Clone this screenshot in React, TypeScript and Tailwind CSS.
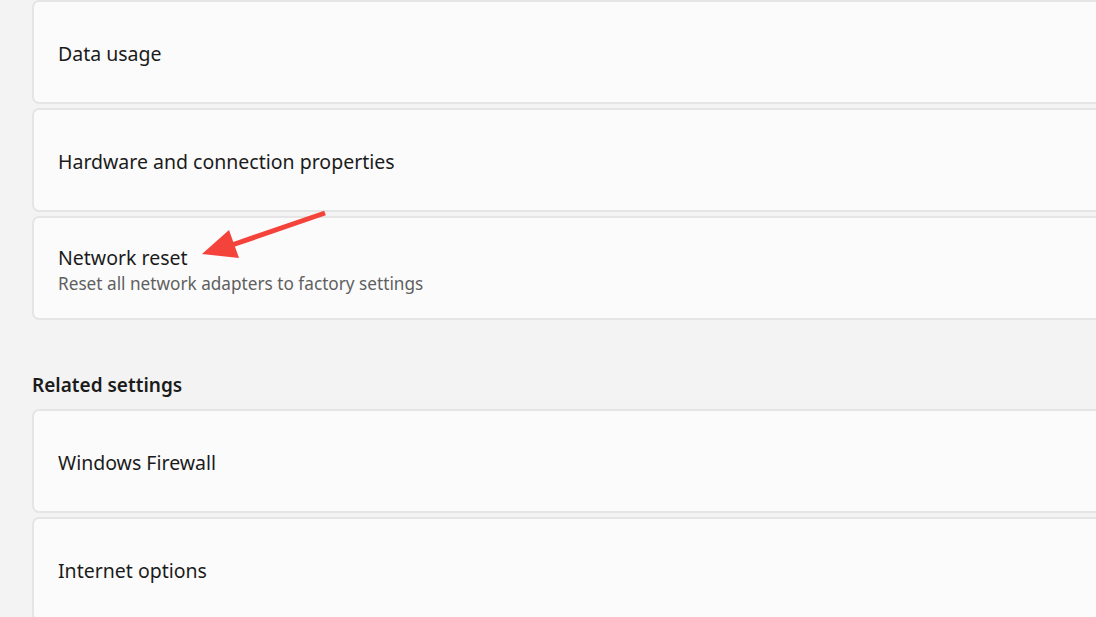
// Windows settings list: network reset section

const font = { fontFamily: '"Noto Sans", "Open Sans", sans-serif' };

type Row = { title: string; subtitle?: string };

const topRows: Row[] = [
  { title: "Data usage" },
  { title: "Hardware and connection properties" },
  { title: "Network reset", subtitle: "Reset all network adapters to factory settings" },
];

const relatedRows: Row[] = [{ title: "Windows Firewall" }, { title: "Internet options" }];

const SettingCard = ({ row }: { row: Row }) => (
  <div
    className={
      row.subtitle
        ? "w-[1120px] h-[104px] shrink-0 flex flex-col justify-center pl-[24px] pt-[6px] bg-[#fbfbfb] border-2 border-[#e5e5e5] rounded-[7px]"
        : "w-[1120px] h-[104px] shrink-0 flex flex-col justify-center pl-[24px] pt-[3px] bg-[#fbfbfb] border-2 border-[#e5e5e5] rounded-[7px]"
    }
  >
    <p className="text-[19.5px] leading-[26px] text-[#1b1b1b]">{row.title}</p>
    {row.subtitle && (
      <p className="text-[17.2px] leading-[26px] text-[#5f5f5f]">{row.subtitle}</p>
    )}
  </div>
);

export default function App() {
  return (
    <div className="relative w-[1096px] h-[617px] overflow-hidden bg-[#f3f3f3]" style={font}>
      <div className="flex flex-col pl-[32px]">
        <div className="flex flex-col gap-[4px]">
          {topRows.map((r) => (
            <SettingCard key={r.title} row={r} />
          ))}
        </div>

        <h2 className="mt-[51px] mb-[10px] text-[19px] leading-[28px] font-semibold text-[#1b1b1b]">
          Related settings
        </h2>

        <div className="flex flex-col gap-[4px]">
          {relatedRows.map((r) => (
            <SettingCard key={r.title} row={r} />
          ))}
        </div>
      </div>

      {/* annotation arrow */}
      <svg className="absolute left-0 top-0 pointer-events-none" width="1096" height="617">
        <line x1="325" y1="213" x2="232" y2="245" stroke="#f4433a" strokeWidth="5" strokeLinecap="butt" />
        <polygon points="202,254 229,230 239,258" fill="#f4433a" />
      </svg>
    </div>
  );
}
